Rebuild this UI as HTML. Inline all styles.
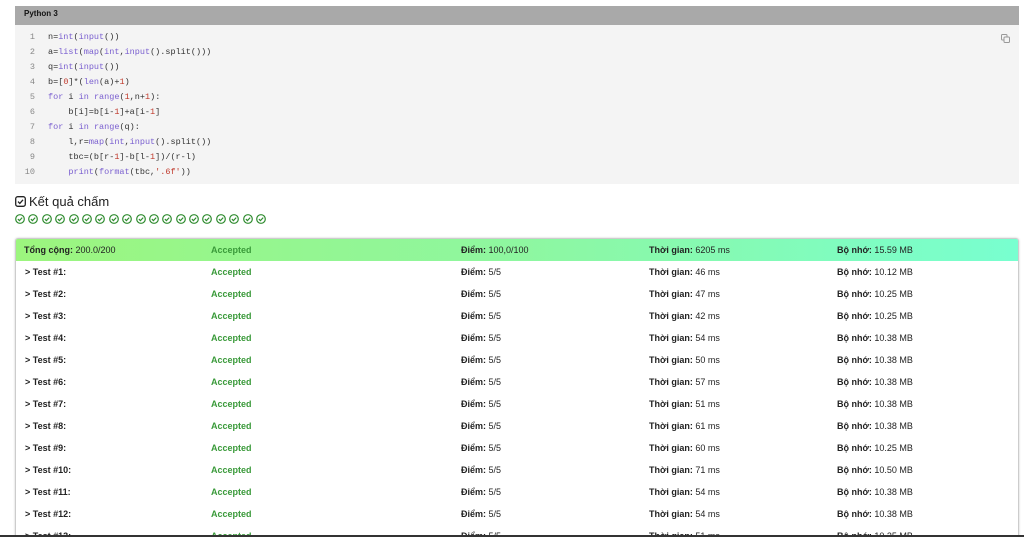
<!DOCTYPE html>
<html><head><meta charset="utf-8"><style>
*{margin:0;padding:0;box-sizing:border-box}
html,body{width:1024px;height:537px;overflow:hidden}
body{background:#fff;font-family:"Liberation Sans",sans-serif;position:relative}
.hdr{position:absolute;left:15px;top:6px;width:1004px;height:19px;background:#a9a9a9;font-size:8px;font-weight:bold;color:#111;padding:3px 0 0 9px}
.code{position:absolute;left:15px;top:25px;width:1004px;height:159px;background:#f4f4f4}
.ln{position:absolute;left:0;width:20px;text-align:right;font:8.5px "Liberation Mono",monospace;color:#888}
.cl{position:absolute;left:33px;font:8.5px "Liberation Mono",monospace;color:#333;white-space:pre}
.k{color:#7a5fd0}.n{color:#c0392b}
.copy{position:absolute;right:9px;top:9px}
.title{position:absolute;left:15px;top:194px;font-size:13px;color:#222;display:flex;align-items:center;gap:3px}
.icons{position:absolute;left:15px;top:214px;display:flex;gap:3.4px}
.icons svg{display:block}
.tbl{position:absolute;left:15px;top:238px;width:1004px;height:310px;border:1px solid #ccc;border-radius:3px;box-shadow:0 0 2px #ccc;overflow:hidden}
.row{position:absolute;left:0;width:1004px;height:22px;font-size:9px;color:#222}
.row span{position:absolute;top:6px;white-space:nowrap}
.tot{background:linear-gradient(90deg,#9cf57e,#8ef7a0 50%,#78ffd0)}
b{font-weight:bold}
.acc{color:#3a9a3a;font-weight:bold}
.bar{position:absolute;left:0;top:535px;width:1024px;height:2px;background:#333}
</style></head><body>
<div class="hdr">Python 3</div>
<div class="code">
<svg class="copy" width="9" height="9" viewBox="0 0 9 9"><rect x="0.5" y="0.5" width="5.5" height="5.5" rx="1" fill="none" stroke="#999"/><rect x="3" y="3" width="5.5" height="5.5" rx="1" fill="#f4f4f4" stroke="#999"/></svg>
<div class="ln" style="top:7px">1</div><div class="cl" style="top:7px">n=<span class="k">int</span>(<span class="k">input</span>())</div>
<div class="ln" style="top:22px">2</div><div class="cl" style="top:22px">a=<span class="k">list</span>(<span class="k">map</span>(<span class="k">int</span>,<span class="k">input</span>().split()))</div>
<div class="ln" style="top:37px">3</div><div class="cl" style="top:37px">q=<span class="k">int</span>(<span class="k">input</span>())</div>
<div class="ln" style="top:52px">4</div><div class="cl" style="top:52px">b=[<span class="n">0</span>]*(<span class="k">len</span>(a)+<span class="n">1</span>)</div>
<div class="ln" style="top:67px">5</div><div class="cl" style="top:67px"><span class="k">for</span> i <span class="k">in</span> <span class="k">range</span>(<span class="n">1</span>,n+<span class="n">1</span>):</div>
<div class="ln" style="top:82px">6</div><div class="cl" style="top:82px">    b[i]=b[i-<span class="n">1</span>]+a[i-<span class="n">1</span>]</div>
<div class="ln" style="top:97px">7</div><div class="cl" style="top:97px"><span class="k">for</span> i <span class="k">in</span> <span class="k">range</span>(q):</div>
<div class="ln" style="top:112px">8</div><div class="cl" style="top:112px">    l,r=<span class="k">map</span>(<span class="k">int</span>,<span class="k">input</span>().split())</div>
<div class="ln" style="top:127px">9</div><div class="cl" style="top:127px">    tbc=(b[r-<span class="n">1</span>]-b[l-<span class="n">1</span>])/(r-l)</div>
<div class="ln" style="top:142px">10</div><div class="cl" style="top:142px">    <span class="k">print</span>(<span class="k">format</span>(tbc,<span class="n">'.6f'</span>))</div>
</div>
<div class="title"><svg width="11" height="11" viewBox="0 0 11 11"><rect x="0.7" y="0.7" width="9.6" height="9.6" rx="2" fill="none" stroke="#222" stroke-width="1.3"/><path d="M3 5.6 L4.8 7.4 L8 3.8" fill="none" stroke="#222" stroke-width="1.3"/></svg>Kết quả chấm</div>
<div class="icons">
<svg width="10" height="10" viewBox="0 0 10 10"><circle cx="5" cy="5" r="4.3" fill="none" stroke="#2e8b2e" stroke-width="1.2"/><path d="M2.9 5.1 L4.4 6.6 L7.2 3.6" fill="none" stroke="#2e8b2e" stroke-width="1.2"/></svg>
<svg width="10" height="10" viewBox="0 0 10 10"><circle cx="5" cy="5" r="4.3" fill="none" stroke="#2e8b2e" stroke-width="1.2"/><path d="M2.9 5.1 L4.4 6.6 L7.2 3.6" fill="none" stroke="#2e8b2e" stroke-width="1.2"/></svg>
<svg width="10" height="10" viewBox="0 0 10 10"><circle cx="5" cy="5" r="4.3" fill="none" stroke="#2e8b2e" stroke-width="1.2"/><path d="M2.9 5.1 L4.4 6.6 L7.2 3.6" fill="none" stroke="#2e8b2e" stroke-width="1.2"/></svg>
<svg width="10" height="10" viewBox="0 0 10 10"><circle cx="5" cy="5" r="4.3" fill="none" stroke="#2e8b2e" stroke-width="1.2"/><path d="M2.9 5.1 L4.4 6.6 L7.2 3.6" fill="none" stroke="#2e8b2e" stroke-width="1.2"/></svg>
<svg width="10" height="10" viewBox="0 0 10 10"><circle cx="5" cy="5" r="4.3" fill="none" stroke="#2e8b2e" stroke-width="1.2"/><path d="M2.9 5.1 L4.4 6.6 L7.2 3.6" fill="none" stroke="#2e8b2e" stroke-width="1.2"/></svg>
<svg width="10" height="10" viewBox="0 0 10 10"><circle cx="5" cy="5" r="4.3" fill="none" stroke="#2e8b2e" stroke-width="1.2"/><path d="M2.9 5.1 L4.4 6.6 L7.2 3.6" fill="none" stroke="#2e8b2e" stroke-width="1.2"/></svg>
<svg width="10" height="10" viewBox="0 0 10 10"><circle cx="5" cy="5" r="4.3" fill="none" stroke="#2e8b2e" stroke-width="1.2"/><path d="M2.9 5.1 L4.4 6.6 L7.2 3.6" fill="none" stroke="#2e8b2e" stroke-width="1.2"/></svg>
<svg width="10" height="10" viewBox="0 0 10 10"><circle cx="5" cy="5" r="4.3" fill="none" stroke="#2e8b2e" stroke-width="1.2"/><path d="M2.9 5.1 L4.4 6.6 L7.2 3.6" fill="none" stroke="#2e8b2e" stroke-width="1.2"/></svg>
<svg width="10" height="10" viewBox="0 0 10 10"><circle cx="5" cy="5" r="4.3" fill="none" stroke="#2e8b2e" stroke-width="1.2"/><path d="M2.9 5.1 L4.4 6.6 L7.2 3.6" fill="none" stroke="#2e8b2e" stroke-width="1.2"/></svg>
<svg width="10" height="10" viewBox="0 0 10 10"><circle cx="5" cy="5" r="4.3" fill="none" stroke="#2e8b2e" stroke-width="1.2"/><path d="M2.9 5.1 L4.4 6.6 L7.2 3.6" fill="none" stroke="#2e8b2e" stroke-width="1.2"/></svg>
<svg width="10" height="10" viewBox="0 0 10 10"><circle cx="5" cy="5" r="4.3" fill="none" stroke="#2e8b2e" stroke-width="1.2"/><path d="M2.9 5.1 L4.4 6.6 L7.2 3.6" fill="none" stroke="#2e8b2e" stroke-width="1.2"/></svg>
<svg width="10" height="10" viewBox="0 0 10 10"><circle cx="5" cy="5" r="4.3" fill="none" stroke="#2e8b2e" stroke-width="1.2"/><path d="M2.9 5.1 L4.4 6.6 L7.2 3.6" fill="none" stroke="#2e8b2e" stroke-width="1.2"/></svg>
<svg width="10" height="10" viewBox="0 0 10 10"><circle cx="5" cy="5" r="4.3" fill="none" stroke="#2e8b2e" stroke-width="1.2"/><path d="M2.9 5.1 L4.4 6.6 L7.2 3.6" fill="none" stroke="#2e8b2e" stroke-width="1.2"/></svg>
<svg width="10" height="10" viewBox="0 0 10 10"><circle cx="5" cy="5" r="4.3" fill="none" stroke="#2e8b2e" stroke-width="1.2"/><path d="M2.9 5.1 L4.4 6.6 L7.2 3.6" fill="none" stroke="#2e8b2e" stroke-width="1.2"/></svg>
<svg width="10" height="10" viewBox="0 0 10 10"><circle cx="5" cy="5" r="4.3" fill="none" stroke="#2e8b2e" stroke-width="1.2"/><path d="M2.9 5.1 L4.4 6.6 L7.2 3.6" fill="none" stroke="#2e8b2e" stroke-width="1.2"/></svg>
<svg width="10" height="10" viewBox="0 0 10 10"><circle cx="5" cy="5" r="4.3" fill="none" stroke="#2e8b2e" stroke-width="1.2"/><path d="M2.9 5.1 L4.4 6.6 L7.2 3.6" fill="none" stroke="#2e8b2e" stroke-width="1.2"/></svg>
<svg width="10" height="10" viewBox="0 0 10 10"><circle cx="5" cy="5" r="4.3" fill="none" stroke="#2e8b2e" stroke-width="1.2"/><path d="M2.9 5.1 L4.4 6.6 L7.2 3.6" fill="none" stroke="#2e8b2e" stroke-width="1.2"/></svg>
<svg width="10" height="10" viewBox="0 0 10 10"><circle cx="5" cy="5" r="4.3" fill="none" stroke="#2e8b2e" stroke-width="1.2"/><path d="M2.9 5.1 L4.4 6.6 L7.2 3.6" fill="none" stroke="#2e8b2e" stroke-width="1.2"/></svg>
<svg width="10" height="10" viewBox="0 0 10 10"><circle cx="5" cy="5" r="4.3" fill="none" stroke="#2e8b2e" stroke-width="1.2"/><path d="M2.9 5.1 L4.4 6.6 L7.2 3.6" fill="none" stroke="#2e8b2e" stroke-width="1.2"/></svg>
</div>
<div class="tbl">
<div class="row tot" style="top:0"><span style="left:8px"><b>Tổng cộng:</b> 200.0/200</span><span class="acc" style="left:195px">Accepted</span><span style="left:445px"><b>Điểm:</b> 100,0/100</span><span style="left:633px"><b>Thời gian:</b> 6205 ms</span><span style="left:821px"><b>Bộ nhớ:</b> 15.59 MB</span></div>
<div class="row" style="top:22px"><span style="left:9px"><b>&gt; Test #1:</b></span><span class="acc" style="left:195px">Accepted</span><span style="left:445px"><b>Điểm:</b> 5/5</span><span style="left:633px"><b>Thời gian:</b> 46 ms</span><span style="left:821px"><b>Bộ nhớ:</b> 10.12 MB</span></div>
<div class="row" style="top:44px"><span style="left:9px"><b>&gt; Test #2:</b></span><span class="acc" style="left:195px">Accepted</span><span style="left:445px"><b>Điểm:</b> 5/5</span><span style="left:633px"><b>Thời gian:</b> 47 ms</span><span style="left:821px"><b>Bộ nhớ:</b> 10.25 MB</span></div>
<div class="row" style="top:66px"><span style="left:9px"><b>&gt; Test #3:</b></span><span class="acc" style="left:195px">Accepted</span><span style="left:445px"><b>Điểm:</b> 5/5</span><span style="left:633px"><b>Thời gian:</b> 42 ms</span><span style="left:821px"><b>Bộ nhớ:</b> 10.25 MB</span></div>
<div class="row" style="top:88px"><span style="left:9px"><b>&gt; Test #4:</b></span><span class="acc" style="left:195px">Accepted</span><span style="left:445px"><b>Điểm:</b> 5/5</span><span style="left:633px"><b>Thời gian:</b> 54 ms</span><span style="left:821px"><b>Bộ nhớ:</b> 10.38 MB</span></div>
<div class="row" style="top:110px"><span style="left:9px"><b>&gt; Test #5:</b></span><span class="acc" style="left:195px">Accepted</span><span style="left:445px"><b>Điểm:</b> 5/5</span><span style="left:633px"><b>Thời gian:</b> 50 ms</span><span style="left:821px"><b>Bộ nhớ:</b> 10.38 MB</span></div>
<div class="row" style="top:132px"><span style="left:9px"><b>&gt; Test #6:</b></span><span class="acc" style="left:195px">Accepted</span><span style="left:445px"><b>Điểm:</b> 5/5</span><span style="left:633px"><b>Thời gian:</b> 57 ms</span><span style="left:821px"><b>Bộ nhớ:</b> 10.38 MB</span></div>
<div class="row" style="top:154px"><span style="left:9px"><b>&gt; Test #7:</b></span><span class="acc" style="left:195px">Accepted</span><span style="left:445px"><b>Điểm:</b> 5/5</span><span style="left:633px"><b>Thời gian:</b> 51 ms</span><span style="left:821px"><b>Bộ nhớ:</b> 10.38 MB</span></div>
<div class="row" style="top:176px"><span style="left:9px"><b>&gt; Test #8:</b></span><span class="acc" style="left:195px">Accepted</span><span style="left:445px"><b>Điểm:</b> 5/5</span><span style="left:633px"><b>Thời gian:</b> 61 ms</span><span style="left:821px"><b>Bộ nhớ:</b> 10.38 MB</span></div>
<div class="row" style="top:198px"><span style="left:9px"><b>&gt; Test #9:</b></span><span class="acc" style="left:195px">Accepted</span><span style="left:445px"><b>Điểm:</b> 5/5</span><span style="left:633px"><b>Thời gian:</b> 60 ms</span><span style="left:821px"><b>Bộ nhớ:</b> 10.25 MB</span></div>
<div class="row" style="top:220px"><span style="left:9px"><b>&gt; Test #10:</b></span><span class="acc" style="left:195px">Accepted</span><span style="left:445px"><b>Điểm:</b> 5/5</span><span style="left:633px"><b>Thời gian:</b> 71 ms</span><span style="left:821px"><b>Bộ nhớ:</b> 10.50 MB</span></div>
<div class="row" style="top:242px"><span style="left:9px"><b>&gt; Test #11:</b></span><span class="acc" style="left:195px">Accepted</span><span style="left:445px"><b>Điểm:</b> 5/5</span><span style="left:633px"><b>Thời gian:</b> 54 ms</span><span style="left:821px"><b>Bộ nhớ:</b> 10.38 MB</span></div>
<div class="row" style="top:264px"><span style="left:9px"><b>&gt; Test #12:</b></span><span class="acc" style="left:195px">Accepted</span><span style="left:445px"><b>Điểm:</b> 5/5</span><span style="left:633px"><b>Thời gian:</b> 54 ms</span><span style="left:821px"><b>Bộ nhớ:</b> 10.38 MB</span></div>
<div class="row" style="top:286px"><span style="left:9px"><b>&gt; Test #13:</b></span><span class="acc" style="left:195px">Accepted</span><span style="left:445px"><b>Điểm:</b> 5/5</span><span style="left:633px"><b>Thời gian:</b> 51 ms</span><span style="left:821px"><b>Bộ nhớ:</b> 10.25 MB</span></div>
</div>
<div class="bar"></div>
</body></html>
